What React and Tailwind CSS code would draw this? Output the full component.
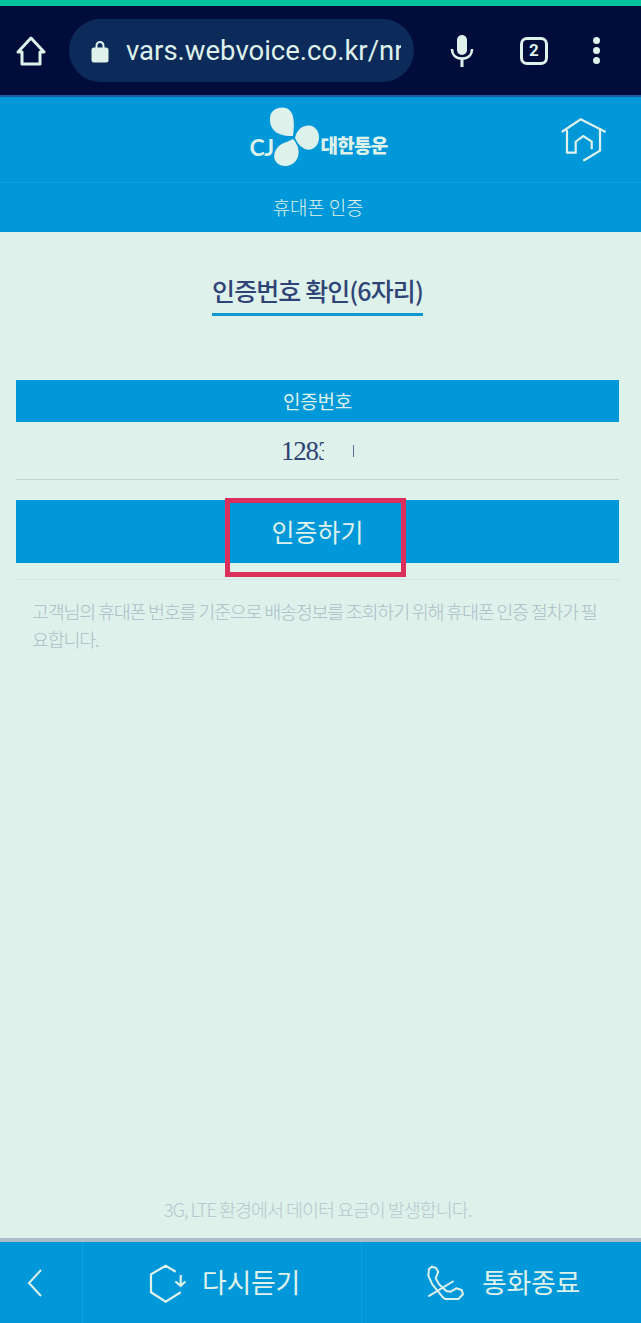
const font = { fontFamily: '"Noto Sans CJK KR", "Noto Sans", sans-serif' };

function Logo() {
  return (
    <div className="flex items-center relative w-[140px] h-[64px]">
      <span className="absolute left-0 top-[25px] text-[#def1ea] text-[23px] leading-[28px] font-bold tracking-[-0.5px]" style={{ fontFamily: 'Lato, sans-serif' }}>CJ</span>
      <svg className="absolute left-[19px] top-[-1px]" width="52" height="62" viewBox="0 0 52 62" fill="#def1ea">
        <path d="M1 11 C1 3 10 -1 17 1 C25 4 26 14 24 29 C12 30 0 25 1 11Z" />
        <path d="M26 31 C28 21 36 17 43 19 C50 22 52 31 48 38 C42 46 32 44 26 31Z" />
        <path d="M24 32 C30 39 31 46 28 52 C24 60 13 61 8 56 C3 51 5 43 11 38 C16 35 21 34 24 32Z" />
      </svg>
      <span className="absolute left-[71px] top-[23px] text-[#def1ea] text-[19px] leading-[28px] font-black tracking-[-0.7px]" style={font}>대한통운</span>
    </div>
  );
}

function App() {
  return (
    <div className="w-[641px] h-[1323px] flex flex-col bg-[#def1ea] overflow-hidden" style={font}>
      {/* status strip */}
      <div className="h-[6px] bg-[#04c49c] shrink-0" />

      {/* browser bar */}
      <div className="h-[89px] bg-[#000d3a] flex items-center shrink-0 border-b-2 border-[#1a5da0] box-content">
        <svg className="ml-[16px]" width="30" height="32" viewBox="0 0 30 32" fill="none" stroke="#def1ea" strokeWidth="3" strokeLinejoin="round">
          <path d="M15 3 L28 17 H24 V29 H6 V17 H2 Z" />
        </svg>
        <div className="ml-[23px] w-[345px] h-[63px] rounded-[32px] bg-[#0c2b5b] flex items-center overflow-hidden">
          <svg className="ml-[22px]" width="18" height="24" viewBox="0 0 18 24" fill="#def1ea">
            <path d="M4.5 9 V6.5 a4.5 4.5 0 0 1 9 0 V9 h-2 V6.5 a2.5 2.5 0 0 0 -5 0 V9Z" />
            <rect x="0.5" y="8.5" width="17" height="15" rx="2.5" />
          </svg>
          <span className="ml-[17px] w-[275px] overflow-hidden whitespace-nowrap text-[#def1ea] text-[27.5px] leading-[34px]" style={{ fontFamily: 'Roboto, sans-serif' }}>vars.webvoice.co.kr/nr</span>
        </div>
        <svg className="ml-[36px]" width="24" height="32" viewBox="0 0 24 32" fill="none">
          <rect x="7" y="0" width="10" height="20" rx="5" fill="#def1ea" />
          <path d="M2 14 C2 20 6 23.5 12 23.5 C18 23.5 22 20 22 14" stroke="#def1ea" strokeWidth="2.5" />
          <path d="M12 23 V32" stroke="#def1ea" strokeWidth="3" />
        </svg>
        <div className="ml-[46px] w-[28px] h-[28px] rounded-[7px] border-[3px] border-[#def1ea] flex items-center justify-center text-[#def1ea] text-[17px] font-bold" style={{ fontFamily: 'Roboto, sans-serif' }}>2</div>
        <div className="ml-[45px] flex flex-col gap-[3px]">
          <span className="w-[7px] h-[7px] rounded-full bg-[#def1ea]" />
          <span className="w-[7px] h-[7px] rounded-full bg-[#def1ea]" />
          <span className="w-[7px] h-[7px] rounded-full bg-[#def1ea]" />
        </div>
      </div>

      {/* site header */}
      <div className="h-[86px] bg-[#0098d8] border-b border-[#0aa3dc] relative flex items-center justify-center shrink-0">
        <div className="ml-[-2px]"><Logo /></div>
        <svg className="absolute left-[555px] top-[13px]" width="60" height="60" viewBox="0 0 60 60" fill="none" stroke="#def1ea" strokeWidth="2.2">
          <path d="M6.7 22 L25.7 9.3 L50.7 22" />
          <path d="M12 20 V42.7 H20.7 V31.7 L28.3 26 L36.7 31.7 V39.3" />
          <path d="M45 18 V40.7 L28.3 50.7" />
        </svg>
      </div>

      {/* sub title */}
      <div className="h-[49px] bg-[#0098d8] pr-[5px] flex items-center justify-center text-[#def1ea] text-[19px] font-light tracking-[-0.2px] shrink-0">휴대폰 인증</div>

      {/* content */}
      <div className="flex-1 flex flex-col min-h-0 pr-[6px]">
        <div className="flex justify-center mt-[41px]">
          <div className="h-[43px] border-b-[3px] border-[#0f97d0] text-[#2f4476] text-[25px] leading-[34px] font-medium tracking-[-0.9px] whitespace-nowrap">인증번호 확인(6자리)</div>
        </div>

        <div className="mx-[16px] mt-[64px] h-[42px] bg-[#0098d8] flex items-center justify-center text-[#def1ea] text-[19px] tracking-[-0.2px]">인증번호</div>

        <div className="mx-[16px] h-[58px] border-b border-[#c3d3d3] relative flex items-center justify-center">
          <div className="w-[73px] flex items-center">
            <span className="w-[44px] overflow-hidden text-[#2f4476] text-[27px] leading-[34px] tracking-[-1.2px] whitespace-nowrap" style={{ fontFamily: '"Liberation Serif", serif' }}>1283</span>
            <span className="ml-[29px] w-px h-[12px] bg-[#5c6f96]" />
          </div>
        </div>

        <div className="mx-[16px] mt-[20px] h-[63px] bg-[#0098d8] relative flex items-center justify-center text-[#def1ea] text-[25px] font-normal tracking-[0px]">
          인증하기
          <div className="absolute left-[209px] top-[-2px] w-[181px] h-[79px] border-[5px] border-[#dc2f5c]" />
        </div>

        <div className="mx-[16px] mt-[16px] border-t border-[#d3e5e2] px-[16px] pt-[17px] text-[#aebdc8] text-[18.5px] leading-[28px] font-light tracking-[-1.25px]">
          고객님의 휴대폰 번호를 기준으로 배송정보를 조회하기 위해 휴대폰 인증 절차가 필요합니다.
        </div>

        <div className="mt-auto pb-[15px] text-center text-[#b8c7ce] text-[18.5px] leading-[28px] font-light tracking-[-1.05px]">3G, LTE 환경에서 데이터 요금이 발생합니다.</div>
      </div>

      {/* footer */}
      <div className="h-[85px] border-t-[4px] border-[#a9bdcb] bg-[#0098d8] flex shrink-0 text-[#def1ea] text-[27px] tracking-[-0.3px]">
        <div className="w-[83px] border-r border-[#0aa3dc] flex items-center justify-center">
          <svg className="mr-[12px]" width="18" height="30" viewBox="0 0 18 30" fill="none" stroke="#def1ea" strokeWidth="2"><path d="M15 2 L3 15 L15 28" /></svg>
        </div>
        <div className="w-[279px] border-r border-[#0aa3dc] flex items-center">
          <svg className="ml-[57px] mt-[5px]" width="60" height="60" viewBox="0 0 60 60" fill="none" stroke="#def1ea" strokeWidth="2.2">
            <path d="M35.7 16.7 L25.7 10.7 L11 19.3 V37.3 L25.7 46.7 L40.7 37.3" />
            <path d="M40.7 20 V30 M35.3 26.5 L40.7 30.7 L45.3 26.5" />
          </svg>
          <span className="ml-[2px] font-normal">다시듣기</span>
        </div>
        <div className="flex-1 flex items-center">
          <svg className="ml-[57px] mt-[5px]" width="60" height="60" viewBox="0 0 60 60" fill="none" stroke="#def1ea" strokeWidth="2" strokeLinejoin="round">
            <path d="M10 14 L12.7 11.7 L16.7 12.7 L19.3 16.7 L16.7 23.3 L20 29.3 L27.3 36 L31.7 36.7 L37.3 33.3 L42.7 35 L44 39.3 L39.3 44 H26 L23.3 41.7 L13.3 29.3 L9.3 20.7 Z" />
            <path d="M9.3 41.3 L34.7 26" />
          </svg>
          <span className="ml-[3px] font-normal">통화종료</span>
        </div>
      </div>
    </div>
  );
}

export default App;
